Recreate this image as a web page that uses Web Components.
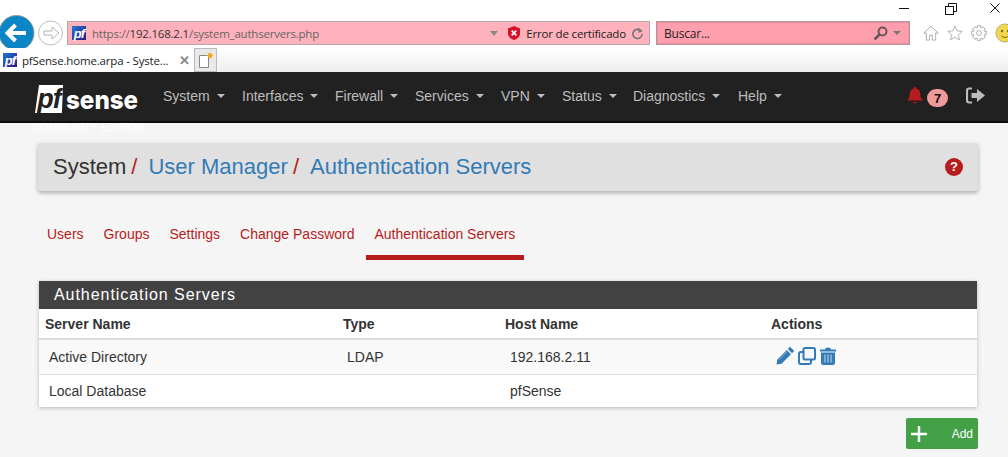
<!DOCTYPE html>
<html><head><meta charset="utf-8"><title>pfSense</title>
<style>
html,body{margin:0;padding:0;height:457px;overflow:hidden;background:#f5f5f5;font-family:"Liberation Sans",Arial,sans-serif}
#app{display:flex;flex-direction:column;width:1008px;height:457px;overflow:hidden}
</style></head><body>
<div id="app">
<ie-chrome></ie-chrome>
<pf-navbar></pf-navbar>
<pf-breadcrumb></pf-breadcrumb>
<pf-tabs></pf-tabs>
<pf-panel></pf-panel>
<pf-add></pf-add>
</div>
<script>
const favicon=(s)=>`<span class="fav" style="width:${s}px;height:${s}px;font-size:${s-1}px">pf</span>`;
const favCss=`.fav{display:inline-flex;align-items:center;justify-content:center;flex:none;background:linear-gradient(135deg,#1d7fd0 0%,#2a3fa8 55%,#2a1a78 100%);color:#fff;font:italic bold 14px "Liberation Sans",sans-serif;letter-spacing:-1px;line-height:1}`;
function gearPath(){
  let d="";const n=8,R=8,r=6.1,c=8.5;
  for(let i=0;i<n;i++){
    const a=i*2*Math.PI/n,w=.26,s=Math.PI/n;
    const pts=[[r,a-s+.12],[R,a-w],[R,a+w],[r,a+s-.12]];
    pts.forEach((p,j)=>{d+=(i===0&&j===0?"M":"L")+(c+p[0]*Math.cos(p[1])).toFixed(2)+" "+(c+p[0]*Math.sin(p[1])).toFixed(2);});
  }
  return d+"Z";
}
function def(name,css,html){
  customElements.define(name,class extends HTMLElement{
    constructor(){super();const r=this.attachShadow({mode:"open"});r.innerHTML=`<style>${css}</style>${html}`;}
  });
}
def("ie-chrome",`:host{display:block;height:72px;background:#fff;flex:none;font-family:"Open Sans","Noto Sans",sans-serif;font-size:12px;color:#222;overflow:hidden}
${favCss}
.win{display:flex;justify-content:flex-end;height:21px;align-items:flex-start;padding:3px 8px 0 0;box-sizing:border-box}
.win svg{display:block}
.row{display:flex;height:27px;align-items:flex-start}
.nav{width:67px;flex:none}
.addr{width:583px;height:24px;box-sizing:border-box;flex:none;background:#ffb1bc;border:1px solid #b3a5a8;display:flex;align-items:center;padding:0 6px 0 4px;color:#222}
.url{margin-left:6px;flex:1;color:#666;font-size:11.5px;letter-spacing:-.21px;white-space:nowrap}
.url b{font-weight:400;color:#333}
.err{font-size:11.5px;letter-spacing:-.17px;margin:0 6px 0 6px;white-space:nowrap}
.search{margin-left:6px;width:254px;height:24px;box-sizing:border-box;flex:none;background:#ff9fae;border:1px solid #a9999c;box-shadow:inset 0 0 0 1px #ff8a9b;display:flex;align-items:center;padding:0 8px 0 7px}
.search span{flex:1;letter-spacing:-.2px}
.tools{display:flex;align-items:center;height:24px;margin-left:13px;gap:8px;overflow:hidden;flex:none;width:85px}
.tools svg{flex:none}
.tabs{position:relative;display:flex;height:24px;background:linear-gradient(#fff 0,#fbfbfb 20%,#eee 100%);align-items:stretch}
.tab{width:195px;box-sizing:border-box;background:#fff;border-right:1px solid #bbb;display:flex;align-items:center;padding-left:3px;flex:none;white-space:nowrap;gap:5px}
.tab .t{flex:1;color:#222;font-size:11.5px;letter-spacing:-.17px}
.tab .x{color:#888;font:bold 13px "Liberation Sans",sans-serif;margin-right:4px}
.new{width:22px;box-sizing:border-box;background:#e9e9e9;border:1px solid #bbb;border-left:0;display:flex;align-items:center;justify-content:center}
`,`
<div class="win">
<svg width="10" height="5" style="margin-top:2px"><rect width="10" height="1" y="3" fill="#111"/></svg>
<svg width="12" height="12" fill="#fff" stroke="#111" style="margin-left:36px"><rect x=".5" y="3.5" width="8" height="8"/><path d="M3.500 3V.5h8v8H9" fill="none"/></svg>
<svg width="10" height="10" stroke="#111" fill="none" style="margin-left:33px"><path d="M.5.5l9 9M9.500.5l-9 9"/></svg>
</div>
<div class="row">
 <div class="nav">
  <svg width="67" height="36" viewBox="0 0 67 36" style="overflow:visible;display:block">
   <circle cx="16.500" cy="12" r="17.500" fill="#0a85c6" stroke="#9a9a9a"/>
   <path d="M26 12H8M15.500 4l-8 8 8 8" fill="none" stroke="#fff" stroke-width="4"/>
   <circle cx="50.500" cy="12" r="12" fill="#fff" stroke="#bdbdbd"/>
   <path d="M44 10h8V6l7 6-7 6v-4h-8z" fill="#fff" stroke="#b5b5b5"/>
  </svg>
 </div>
 <div class="addr">${favicon(14)}<span class="url">https://<b>192.168.2.1</b>/system_authservers.php</span>
  <svg width="8" height="5" viewBox="0 0 8 5"><path d="M0 0h8L4 5z" fill="#888"/></svg>
  <svg width="12" height="14" viewBox="0 0 13 15" style="margin-left:10px"><path d="M6.500 0 13 2.500V8c0 3.500-3 6-6.500 7C3 14 0 11.500 0 8V2.500z" fill="#d3122a"/><path d="M4 5l5 5M9 5l-5 5" stroke="#fff" stroke-width="1.800"/></svg>
  <span class="err">Error de certificado</span>
  <svg width="11" height="13" viewBox="0 0 12 13"><path d="M10 4a5 5 0 1 0 1 3" fill="none" stroke="#777" stroke-width="1.800"/><path d="M7 0v6l4.500-2z" fill="#777"/></svg>
 </div>
 <div class="search"><span>Buscar...</span>
  <svg width="15" height="15" viewBox="0 0 15 15"><circle cx="9.500" cy="5.500" r="4" fill="none" stroke="#66555a" stroke-width="2"/><path d="M6.500 8.500 1.500 13.500" stroke="#66555a" stroke-width="2.500"/></svg>
  <svg width="8" height="4" viewBox="0 0 8 4" style="margin-left:5px"><path d="M0 0h8L4 4z" fill="#777"/></svg>
 </div>
 <div class="tools">
  <svg width="16" height="16" viewBox="0 0 17 16" fill="#fff" stroke="#aaa"><path d="M.8 8 8.500.8 16.200 8h-2.700v7.500h-3.500v-5H7v5H3.500V8z"/></svg>
  <svg width="16" height="16" viewBox="0 0 18 17" fill="#fff" stroke="#aaa"><path d="m9 .8 2.400 5.300 5.800.6-4.300 3.900 1.200 5.700L9 13.400l-5.100 2.900 1.200-5.700L.8 6.700l5.800-.6z"/></svg>
  <svg width="16" height="16" viewBox="0 0 17 17" fill="none" stroke="#aaa"><circle cx="8.500" cy="8.500" r="2.600"/><path d="${gearPath()}"/></svg>
  <svg width="20" height="20" viewBox="0 0 20 20"><circle cx="10" cy="10" r="9" fill="#f4d84c" stroke="#b9ad70"/><circle cx="7" cy="8" r="1.200" fill="#776a20"/><circle cx="13" cy="8" r="1.200" fill="#776a20"/><path d="M6 12.500c2 2.500 6 2.500 8 0" fill="none" stroke="#776a20"/></svg>
 </div>
</div>
<div class="tabs">
 <div class="tab">${favicon(14)}<span class="t">pfSense.home.arpa - Syste...</span><span class="x">✕</span></div>
 <div class="new"><svg width="16" height="17" viewBox="0 0 16 17"><path d="M1.500 3.500h9v12h-9z" fill="#fff" stroke="#888"/><path d="M12 .5v6M9 3.500h6M10 1.500l4 4M14 1.500l-4 4" stroke="#f2a91e" stroke-width="1.200"/></svg></div>
</div>`);

def("pf-navbar",`:host{display:block;position:relative;height:51px;box-sizing:border-box;background:#212121;border-bottom:2px solid #0c0c0c;flex:none;font:14px "Liberation Sans",sans-serif;color:#bdbdbd;overflow:visible;z-index:1}
.bar{display:flex;align-items:center;height:47px;padding-left:35px}
.logo{width:128px;display:flex;align-items:center;flex:none;height:30px;margin-top:5px}
.pf{width:28px;height:28px;margin-top:2px;background:#fff;color:#212121;font:italic bold 27px/28px "Liberation Sans",sans-serif;letter-spacing:-1px;text-align:center;clip-path:polygon(4px 0,100% 0,96% 100%,0 100%);flex:none}
.sense{color:#fff;font:800 26px "Inter","Liberation Sans",sans-serif;margin-left:3px;position:relative;top:1px;transform:scaleX(.93);transform-origin:left center;flex:none}
.item{white-space:nowrap;display:flex;align-items:center;flex:none}
.item i{display:inline-block;border-top:4px solid #bdbdbd;border-left:4px solid transparent;border-right:4px solid transparent;margin-left:7px}
.menu{display:flex;flex:1}
.right{display:flex;align-items:center;margin-right:23px}
.badge{display:inline-flex;width:21px;height:18px;border-radius:9px;background:#ef9a9a;color:#111;font:bold 13px "Liberation Sans",sans-serif;align-items:center;justify-content:center;margin:5px 18px 0 4px}
.ce{position:absolute;left:33px;top:50px;font:10px "Liberation Sans",sans-serif;color:#fff;letter-spacing:.35px;white-space:nowrap}
`,`<div class="bar"><div class="logo"><span class="pf">pf</span><span class="sense">sense</span></div>
<div class="menu">
<span class="item" style="width:79px">System<i></i></span>
<span class="item" style="width:93px">Interfaces<i></i></span>
<span class="item" style="width:80px">Firewall<i></i></span>
<span class="item" style="width:86px">Services<i></i></span>
<span class="item" style="width:61px">VPN<i></i></span>
<span class="item" style="width:71px">Status<i></i></span>
<span class="item" style="width:105px">Diagnostics<i></i></span>
<span class="item">Help<i></i></span>
</div>
<div class="right">
<svg width="16" height="18" viewBox="0 0 16 18"><path d="M8 0c1 0 1.300.7 1.300 1.500C12 2.200 13.300 4.500 13.300 7.500c0 3 1 4.500 2.700 6H0c1.700-1.500 2.700-3 2.700-6 0-3 1.300-5.300 4-6C6.700.7 7 0 8 0z" fill="#b71c1c"/><path d="M5.800 15h4.400c-.4 1.800-3.900 1.800-4.400 0z" fill="#b71c1c"/></svg>
<span class="badge">7</span>
<svg width="19" height="17" viewBox="0 0 19 17" fill="#bdbdbd"><path d="M6 1.500H3A2 2 0 0 0 1 3.500v10a2 2 0 0 0 2 2h3" fill="none" stroke="#bdbdbd" stroke-width="2.200"/><path d="M5.500 6H11V2l8 6.500L11 15v-4H5.500z"/></svg>
</div></div>
<span class="ce">COMMUNITY EDITION</span>`);

def("pf-breadcrumb",`:host{display:flex;align-items:center;margin:20px 30px 0 38px;height:48px;background:#e0e0e0;border-radius:2px;box-shadow:0 2px 4px rgba(0,0,0,.3);padding:0 15px 0 15px;font:22px "Liberation Sans",sans-serif;color:#333;flex:none;white-space:nowrap}
.s{color:#b71c1c;margin:0 11px 0 5px}
a{color:#337ab7;text-decoration:none}
.sp{flex:1}
.q{width:18px;height:18px;border-radius:50%;background:#b71c1c;color:#fff;font:bold 13px/18px "Liberation Sans",sans-serif;text-align:center}
`,`<span>System</span><span class="s">/</span><a>User Manager</a><span class="s">/</span><a>Authentication Servers</a><span class="sp"></span><span class="q">?</span>`);

def("pf-tabs",`:host{display:flex;margin:23px 0 0 37px;font:14px "Liberation Sans",sans-serif;color:#b71c1c;flex:none;white-space:nowrap}
a{display:block;height:46px;box-sizing:border-box;padding:12px 10px 0}
a.on{border-bottom:5px solid #b71c1c;padding:12px 9px 0 8px;margin-left:2px}
`,`<a>Users</a><a>Groups</a><a>Settings</a><a>Change Password</a><a class="on">Authentication Servers</a>`);

def("pf-panel",`:host{display:block;margin:21px 31px 0 39px;background:#fff;box-shadow:0 1px 4px rgba(0,0,0,.25);flex:none;font:14px "Liberation Sans",sans-serif;color:#333}
h2{margin:0;height:28px;box-sizing:border-box;background:#424242;color:#fff;font:16px/27px "Liberation Sans",sans-serif;letter-spacing:.95px;padding-left:15px}
table{border-collapse:collapse;width:100%;table-layout:fixed}
th{height:30px;padding:1px 0 0 6px;text-align:left;font-weight:bold;border-bottom:2px solid #ddd;box-sizing:border-box}
td{padding:0 0 0 10px;height:33px;box-sizing:border-box;border-bottom:1px solid #ddd}
td.h{padding-left:11px}
tr.a td{background:#f9f9f9;height:35px}
tr:last-child td{border-bottom:0;height:33px}
.ic{display:flex;align-items:center;margin:-2px 0 0 1px}
`,`<h2>Authentication Servers</h2>
<table><colgroup><col style="width:298px"><col style="width:162px"><col style="width:266px"><col></colgroup>
<tr><th>Server Name</th><th>Type</th><th>Host Name</th><th>Actions</th></tr>
<tr class="a"><td>Active Directory</td><td>LDAP</td><td class="h">192.168.2.11</td><td><div class="ic">
<svg width="19" height="19" viewBox="0 0 19 19" fill="#337ab7"><path d="M14 .8 18.200 5 16 7.200 11.800 3zM10.800 4 15 8.200 5.500 17.700.6 18.400l.7-4.900z"/><path d="M3 13.500l8-8" stroke="#a9c6e0" stroke-width=".8"/></svg>
<svg width="18" height="18" viewBox="0 0 18 18" fill="none" stroke="#337ab7" stroke-width="2" style="margin-left:3px"><path d="M5 5H3a2 2 0 0 0-2 2v8a2 2 0 0 0 2 2h8a2 2 0 0 0 2-2v-2"/><rect x="5.500" y="1" width="11.500" height="11.500" rx="1.500"/></svg>
<svg width="16" height="18" viewBox="0 0 16 18" fill="#337ab7" style="margin-left:4px"><path d="M0 2.500h5L6 .8h4l1 1.700h5V4.500H0z"/><path d="M1 5.500h14V16a2 2 0 0 1-2 2H3a2 2 0 0 1-2-2z"/><path d="M5 7.500v8M8 7.500v8M11 7.500v8" stroke="#a9c6e0" stroke-width="1.300"/></svg>
</div></td></tr>
<tr><td>Local Database</td><td></td><td class="h">pfSense</td><td></td></tr>
</table>`);

def("pf-add",`:host{display:flex;justify-content:flex-end;margin:11px 30px 0 0;flex:none}
button{all:unset;box-sizing:border-box;width:72px;height:31px;background:#43a047;border-radius:2px;color:#fff;font:12px "Liberation Sans",sans-serif;display:flex;align-items:center;justify-content:space-between;padding:0 5px}
`,`<button><svg width="16" height="16" viewBox="0 0 16 16" fill="#fff"><path d="M6.800 0h2.400v6.800H16v2.400H9.200V16H6.800V9.200H0V6.800h6.800z"/></svg><span>Add</span></button>`);
</script>
</body></html>
